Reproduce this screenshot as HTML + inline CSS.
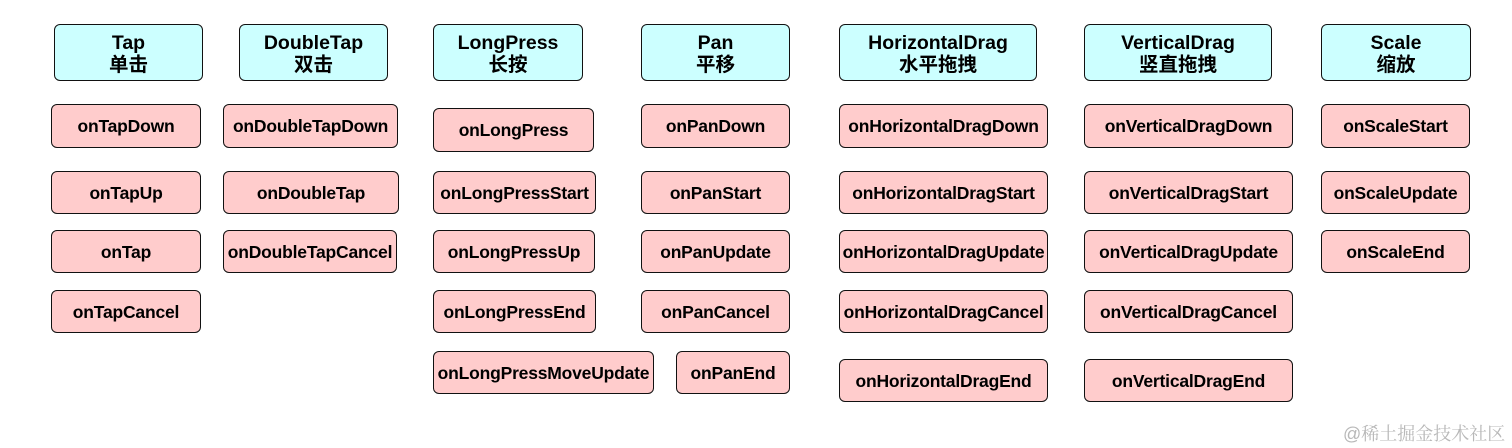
<!DOCTYPE html>
<html><head><meta charset="utf-8"><style>
body{margin:0;width:1512px;height:448px;background:#fff;position:relative;overflow:hidden;font-family:"Liberation Sans","Noto Sans CJK SC",sans-serif;font-weight:bold;color:#000}
.b{position:absolute;box-sizing:border-box;border:1.6px solid #111;border-radius:6px;display:flex;align-items:center;justify-content:center;text-align:center;white-space:nowrap;padding-top:1px}
.h{background:#ccffff;font-size:19.5px;line-height:22px;flex-direction:column;padding-top:3px}
.p{background:#ffcccc;font-size:17.5px;letter-spacing:-0.2px}
.w{position:absolute;left:1343px;top:420px;font-size:18px;color:#b8b8b8;font-weight:normal;font-family:"Liberation Sans","Noto Serif CJK SC",serif}
</style></head><body>
<div class="b h" style="left:54px;top:24px;width:149px;height:57px">Tap<br>单击</div>
<div class="b h" style="left:239px;top:24px;width:149px;height:57px">DoubleTap<br>双击</div>
<div class="b h" style="left:433px;top:24px;width:150px;height:57px">LongPress<br>长按</div>
<div class="b h" style="left:641px;top:24px;width:149px;height:57px">Pan<br>平移</div>
<div class="b h" style="left:839px;top:24px;width:198px;height:57px">HorizontalDrag<br>水平拖拽</div>
<div class="b h" style="left:1084px;top:24px;width:188px;height:57px">VerticalDrag<br>竖直拖拽</div>
<div class="b h" style="left:1321px;top:24px;width:150px;height:57px">Scale<br>缩放</div>

<div class="b p" style="left:51px;top:104px;width:150px;height:44px">onTapDown</div>
<div class="b p" style="left:51px;top:171px;width:150px;height:43px">onTapUp</div>
<div class="b p" style="left:51px;top:230px;width:150px;height:43px">onTap</div>
<div class="b p" style="left:51px;top:290px;width:150px;height:43px">onTapCancel</div>

<div class="b p" style="left:223px;top:104px;width:175px;height:44px">onDoubleTapDown</div>
<div class="b p" style="left:223px;top:171px;width:176px;height:43px">onDoubleTap</div>
<div class="b p" style="left:223px;top:230px;width:174px;height:43px">onDoubleTapCancel</div>

<div class="b p" style="left:433px;top:108px;width:161px;height:44px">onLongPress</div>
<div class="b p" style="left:433px;top:171px;width:163px;height:43px">onLongPressStart</div>
<div class="b p" style="left:433px;top:230px;width:162px;height:43px">onLongPressUp</div>
<div class="b p" style="left:433px;top:290px;width:163px;height:43px">onLongPressEnd</div>
<div class="b p" style="left:433px;top:351px;width:221px;height:43px">onLongPressMoveUpdate</div>

<div class="b p" style="left:641px;top:104px;width:149px;height:44px">onPanDown</div>
<div class="b p" style="left:641px;top:171px;width:149px;height:43px">onPanStart</div>
<div class="b p" style="left:641px;top:230px;width:149px;height:43px">onPanUpdate</div>
<div class="b p" style="left:641px;top:290px;width:149px;height:43px">onPanCancel</div>
<div class="b p" style="left:676px;top:351px;width:114px;height:43px">onPanEnd</div>

<div class="b p" style="left:839px;top:104px;width:209px;height:44px">onHorizontalDragDown</div>
<div class="b p" style="left:839px;top:171px;width:209px;height:43px">onHorizontalDragStart</div>
<div class="b p" style="left:839px;top:230px;width:209px;height:43px">onHorizontalDragUpdate</div>
<div class="b p" style="left:839px;top:290px;width:209px;height:43px">onHorizontalDragCancel</div>
<div class="b p" style="left:839px;top:359px;width:209px;height:43px">onHorizontalDragEnd</div>

<div class="b p" style="left:1084px;top:104px;width:209px;height:44px">onVerticalDragDown</div>
<div class="b p" style="left:1084px;top:171px;width:209px;height:43px">onVerticalDragStart</div>
<div class="b p" style="left:1084px;top:230px;width:209px;height:43px">onVerticalDragUpdate</div>
<div class="b p" style="left:1084px;top:290px;width:209px;height:43px">onVerticalDragCancel</div>
<div class="b p" style="left:1084px;top:359px;width:209px;height:43px">onVerticalDragEnd</div>

<div class="b p" style="left:1321px;top:104px;width:149px;height:44px">onScaleStart</div>
<div class="b p" style="left:1321px;top:171px;width:149px;height:43px">onScaleUpdate</div>
<div class="b p" style="left:1321px;top:230px;width:149px;height:43px">onScaleEnd</div>

<div class="w">@稀土掘金技术社区</div>
</body></html>
